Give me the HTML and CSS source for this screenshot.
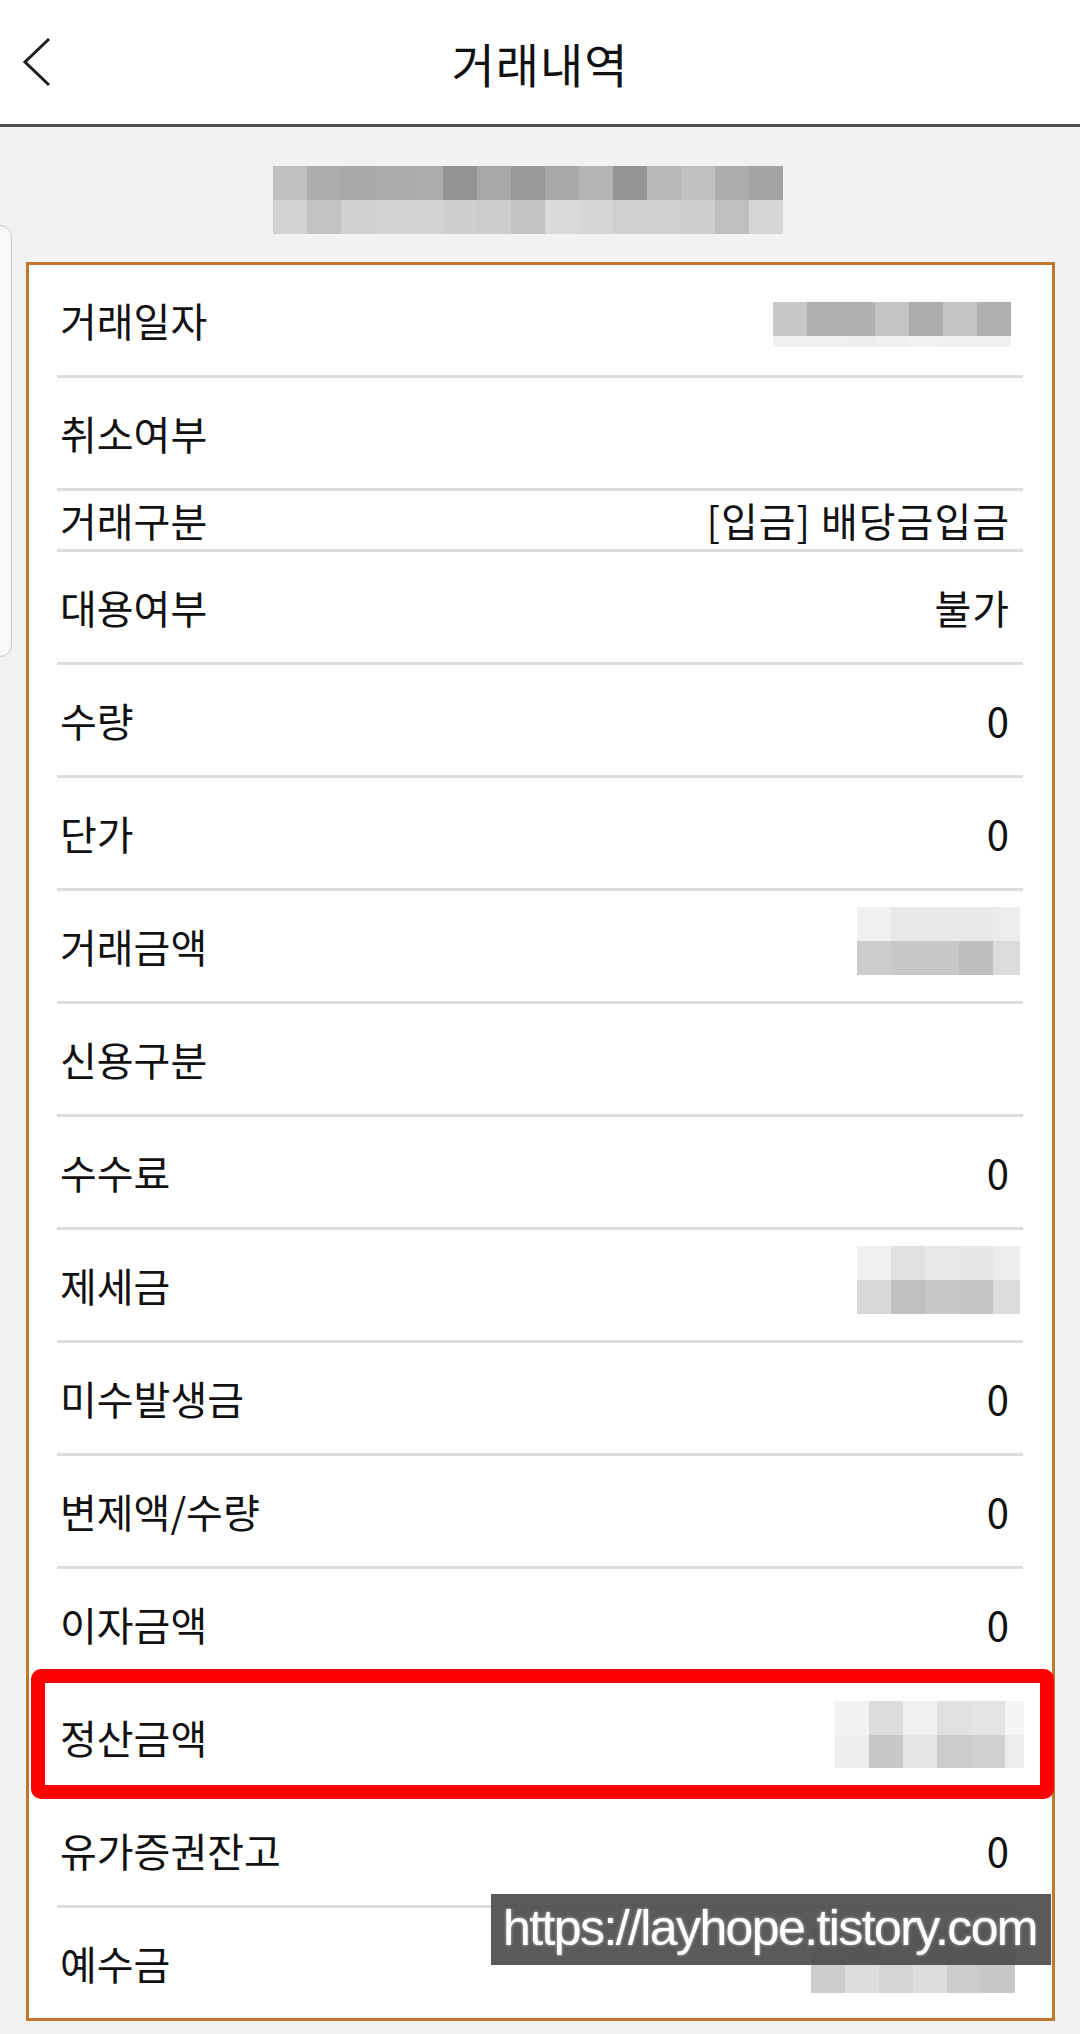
FILE: index.html
```html
<html>
<head>
	<title>거래내역</title>
	<meta charset="utf-8">
	<link rel="stylesheet" href="styles.css">
</head>
<body>
	<header class="topbar">
		<a class="back">
			<svg width="30" height="50" viewBox="0 0 30 50"><polyline points="27,2 3,25 27,48" fill="none" stroke="#1e1e1e" stroke-width="3"/></svg>
		</a>
		<h1 class="title">거래내역</h1>
		<span></span>
	</header>

	<div class="edge-handle"></div>

	<div class="account">
		<div class="mosaic mosaic-account">
			<i class="kc0"></i><i class="kad"></i><i class="ka9"></i><i class="kaa"></i><i class="kac"></i><i class="k93"></i><i class="ka8"></i><i class="k99"></i><i class="ka8"></i><i class="kb4"></i><i class="k96"></i><i class="kb8"></i><i class="kc0"></i><i class="kac"></i><i class="ka4"></i>
			<i class="kd2"></i><i class="kc2"></i><i class="kd0"></i><i class="kd4"></i><i class="kd2"></i><i class="kcf"></i><i class="kcd"></i><i class="kc2"></i><i class="kda"></i><i class="kd6"></i><i class="kd0"></i><i class="kd0"></i><i class="kcf"></i><i class="kc0"></i><i class="kd6"></i>
		</div>
	</div>

	<section class="card">
		<div class="row">
			<span class="label">거래일자</span>
			<div class="mosaic mosaic-date">
				<i class="kc8"></i><i class="kb0"></i><i class="kb0"></i><i class="kc4"></i><i class="kac"></i><i class="kc4"></i><i class="kb0"></i>
				<i class="kf0"></i><i class="kf0"></i><i class="kee"></i><i class="kf0"></i><i class="kf2"></i><i class="kf0"></i><i class="kf0"></i>
			</div>
		</div>
		<div class="row">
			<span class="label">취소여부</span>
		</div>
		<div class="row row-short">
			<span class="label">거래구분</span>
			<span class="value">[입금] 배당금입금</span>
		</div>
		<div class="row">
			<span class="label">대용여부</span>
			<span class="value">불가</span>
		</div>
		<div class="row">
			<span class="label">수량</span>
			<span class="value">0</span>
		</div>
		<div class="row">
			<span class="label">단가</span>
			<span class="value">0</span>
		</div>
		<div class="row">
			<span class="label">거래금액</span>
			<div class="mosaic mosaic-amount">
				<i class="kf0"></i><i class="ke8"></i><i class="ke8"></i><i class="ke8"></i><i class="kec"></i>
				<i class="kcc"></i><i class="kc8"></i><i class="kc8"></i><i class="kbe"></i><i class="kdc"></i>
			</div>
		</div>
		<div class="row">
			<span class="label">신용구분</span>
		</div>
		<div class="row">
			<span class="label">수수료</span>
			<span class="value">0</span>
		</div>
		<div class="row">
			<span class="label">제세금</span>
			<div class="mosaic mosaic-amount">
				<i class="kf0"></i><i class="ke0"></i><i class="ke8"></i><i class="ke6"></i><i class="kec"></i>
				<i class="kd8"></i><i class="kc0"></i><i class="kc8"></i><i class="kc4"></i><i class="kdc"></i>
			</div>
		</div>
		<div class="row">
			<span class="label">미수발생금</span>
			<span class="value">0</span>
		</div>
		<div class="row">
			<span class="label">변제액/수량</span>
			<span class="value">0</span>
		</div>
		<div class="row">
			<span class="label">이자금액</span>
			<span class="value">0</span>
		</div>
		<div class="row">
			<span class="label">정산금액</span>
			<div class="mosaic mosaic-settle">
				<i class="kf2"></i><i class="kdc"></i><i class="kf0"></i><i class="ke0"></i><i class="ke4"></i><i class="kf4"></i>
				<i class="kee"></i><i class="kc8"></i><i class="ke6"></i><i class="kcc"></i><i class="kd0"></i><i class="kec"></i>
			</div>
			<div class="highlight"></div>
		</div>
		<div class="row">
			<span class="label">유가증권잔고</span>
			<span class="value">0</span>
		</div>
		<div class="row">
			<span class="label">예수금</span>
			<div class="mosaic mosaic-deposit">
				<i class="ke0"></i><i class="kd4"></i><i class="ke0"></i><i class="kd8"></i><i class="kd4"></i><i class="kd0"></i>
				<i class="kcc"></i><i class="kdd"></i><i class="kd5"></i><i class="kdd"></i><i class="kcc"></i><i class="kc8"></i>
			</div>
		</div>
	</section>

	<div class="watermark">https://layhope.tistory.com</div>
</body>
</html>
```

FILE: styles.css
```css
body {
    margin: 0;
    position: relative;
    background-color: #f2f2f2;
    font-family: "Noto Sans CJK KR", "Noto Sans", sans-serif;
    color: #111;
}

/* top bar */
.topbar {
    display: grid;
    grid-template-columns: 124px 1fr 124px;
    align-items: center;
    height: 124px;
    background-color: #fff;
    border-bottom: 3px solid #4c4c4c;
}

.back {
    display: flex;
    padding-left: 22px;
}

.title {
    margin: 0;
    text-align: center;
    font-size: 47px;
    font-weight: 400;
    letter-spacing: 1px;
}

/* floating edge panel tab */
.edge-handle {
    position: absolute;
    left: -20px;
    top: 225px;
    width: 30px;
    height: 430px;
    background-color: #f8f8f8;
    border: 1px solid #c8c8c8;
    border-radius: 12px;
}

/* blurred blocks */
.mosaic {
    display: grid;
}

.mosaic i {
    display: block;
}

.account {
    display: flex;
    justify-content: center;
    padding: 39px 24px 28px 0;
}

.mosaic-account {
    grid-template-columns: repeat(15, 34px);
    grid-template-rows: 34px 34px;
}

.mosaic-date {
    grid-template-columns: repeat(7, 34px);
    grid-template-rows: 34px 11px;
    margin: 9px -1px 0 0;
}

.mosaic-amount {
    grid-template-columns: repeat(4, 34px) 27px;
    grid-template-rows: 34px 34px;
    margin: -10px -10px 0 0;
}

.mosaic-settle {
    grid-template-columns: repeat(5, 34px) 19px;
    grid-template-rows: 34px 33px;
    margin: -5px -14px 0 0;
}

.mosaic-deposit {
    grid-template-columns: repeat(6, 34px);
    grid-template-rows: 33px 33px;
    margin: -7px -5px 0 0;
}

.k93 { background-color: #939393; }
.k96 { background-color: #969696; }
.k99 { background-color: #999999; }
.ka4 { background-color: #a4a4a4; }
.ka8 { background-color: #a8a8a8; }
.ka9 { background-color: #a9a9a9; }
.kaa { background-color: #aaaaaa; }
.kac { background-color: #acacac; }
.kad { background-color: #adadad; }
.kb0 { background-color: #b0b0b0; }
.kb4 { background-color: #b4b4b4; }
.kb8 { background-color: #b8b8b8; }
.kbe { background-color: #bebebe; }
.kc0 { background-color: #c0c0c0; }
.kc2 { background-color: #c2c2c2; }
.kc4 { background-color: #c4c4c4; }
.kc8 { background-color: #c8c8c8; }
.kcc { background-color: #cccccc; }
.kcd { background-color: #cdcdcd; }
.kcf { background-color: #cfcfcf; }
.kd0 { background-color: #d0d0d0; }
.kd2 { background-color: #d2d2d2; }
.kd4 { background-color: #d4d4d4; }
.kd5 { background-color: #d5d5d5; }
.kd6 { background-color: #d6d6d6; }
.kd8 { background-color: #d8d8d8; }
.kda { background-color: #dadada; }
.kdc { background-color: #dcdcdc; }
.kdd { background-color: #dddddd; }
.ke0 { background-color: #e0e0e0; }
.ke4 { background-color: #e4e4e4; }
.ke6 { background-color: #e6e6e6; }
.ke8 { background-color: #e8e8e8; }
.kec { background-color: #ececec; }
.kee { background-color: #eeeeee; }
.kf0 { background-color: #f0f0f0; }
.kf2 { background-color: #f2f2f2; }
.kf4 { background-color: #f4f4f4; }

/* detail card */
.card {
    margin: 0 25px 0 26px;
    background-color: #fff;
    border: 3px solid #c0772f;
}

.row {
    position: relative;
    display: flex;
    justify-content: space-between;
    align-items: center;
    height: 110px;
    margin: 0 29px 0 28px;
    padding: 0 13px 0 3px;
    border-bottom: 3px solid #dcdcdc;
    font-size: 40px;
}

.row:last-child {
    border-bottom: none;
}

.row-short {
    height: 58px;
}

.value {
    letter-spacing: 1px;
}

/* red annotation box */
.highlight {
    position: absolute;
    top: -13px;
    bottom: -7px;
    left: -26px;
    right: -31px;
    border: 14px solid #ff0000;
    border-radius: 10px;
}

.watermark {
    position: absolute;
    left: 491px;
    top: 1894px;
    width: 548px;
    height: 71px;
    padding-left: 12px;
    background-color: rgba(72, 72, 72, 0.9);
    color: #fff;
    font-family: "Liberation Sans", Arial, sans-serif;
    font-size: 50px;
    line-height: 68px;
    letter-spacing: -1.6px;
    text-shadow: 0 0 3px rgba(255, 255, 255, 0.7);
}
```
